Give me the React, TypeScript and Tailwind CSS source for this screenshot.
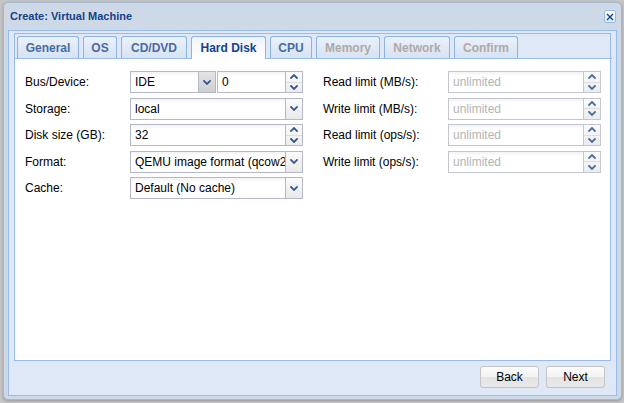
import React from 'react'

const Chevron = ({ up = false, color = '#34568f' }: { up?: boolean; color?: string }) => (
  <svg width="8" height="5" viewBox="0 0 8 5" className={up ? 'rotate-180' : ''}>
    <path d="M1 1 L4 4 L7 1" fill="none" stroke={color} strokeWidth="1.8" strokeLinecap="square" />
  </svg>
)

const CloseIcon = () => (
  <svg width="8" height="8" viewBox="0 0 8 8">
    <path d="M1 1 L7 7 M7 1 L1 7" stroke="#15428b" strokeWidth="1.4" />
  </svg>
)

interface FieldProps {
  value?: string
  placeholder?: string
  width: string
  kind: 'combo' | 'spin'
  disabled?: boolean
  active?: boolean
}

function Field({ value, placeholder, width, kind, disabled, active }: FieldProps) {
  const border = disabled ? 'border-[#c3c6d2]' : 'border-[#b5b8c8]'
  return (
    <div className={`${width} h-[22px] flex border ${border} bg-white overflow-hidden`}>
      <div className="flex-1 min-w-0 flex items-center pl-[4px] text-[12px] whitespace-nowrap overflow-hidden bg-[linear-gradient(to_bottom,#f3f3f3_0px,#ffffff_4px)]">
        {value ? <span className="text-black">{value}</span> : <span className="text-[#b4b4b4]">{placeholder}</span>}
      </div>
      {kind === 'combo' ? (
        <div
          className={`w-[17px] shrink-0 flex items-center justify-center border-l ${border} ${
            active
              ? 'bg-[linear-gradient(to_bottom,#e4e4e4,#cfcfcf)]'
              : 'bg-[linear-gradient(to_bottom,#fbfbfb,#e9e9e9)]'
          }`}
        >
          <Chevron color="#3a5a92" />
        </div>
      ) : (
        <div className={`w-[17px] shrink-0 flex flex-col border-l ${border} bg-[linear-gradient(to_bottom,#fbfbfb,#ececec)]`}>
          <div className="flex-1 flex items-center justify-center border-b border-[#dedede]">
            <Chevron up color={disabled ? '#4c6b9c' : '#34568f'} />
          </div>
          <div className="flex-1 flex items-center justify-center">
            <Chevron color={disabled ? '#4c6b9c' : '#34568f'} />
          </div>
        </div>
      )}
    </div>
  )
}

const tabs = [
  { label: 'General', w: 'w-[62px]', state: 'normal' },
  { label: 'OS', w: 'w-[34px]', state: 'normal' },
  { label: 'CD/DVD', w: 'w-[66px]', state: 'normal' },
  { label: 'Hard Disk', w: 'w-[75px]', state: 'active' },
  { label: 'CPU', w: 'w-[42px]', state: 'normal' },
  { label: 'Memory', w: 'w-[64px]', state: 'disabled' },
  { label: 'Network', w: 'w-[66px]', state: 'disabled' },
  { label: 'Confirm', w: 'w-[64px]', state: 'disabled' },
]

function Tab({ label, w, state }: { label: string; w: string; state: string }) {
  if (state === 'active') {
    return (
      <div className={`${w} h-[23px] -mb-px flex items-center justify-center rounded-t-[3px] border border-b-0 border-[#8db2e3] bg-[linear-gradient(to_bottom,#eef4fb,#ffffff)] text-[12px] font-bold text-[#15428b]`}>
        {label}
      </div>
    )
  }
  return (
    <div
      className={`${w} h-[22px] flex items-center justify-center rounded-t-[3px] border border-b-0 border-[#8db2e3] bg-[linear-gradient(to_bottom,#eaf1fa,#d6e3f3)] text-[12px] font-bold ${
        state === 'disabled' ? 'text-[#b1a8a8]' : 'text-[#4a6b9e]'
      }`}
    >
      {label}
    </div>
  )
}

function Label({ text, w }: { text: string; w: string }) {
  return <div className={`${w} shrink-0 text-[12px] text-black`}>{text}</div>
}

function Button({ text }: { text: string }) {
  return (
    <button className="w-[59px] h-[22px] rounded-[3px] border border-[#c4c4c4] bg-[linear-gradient(to_bottom,#fcfcfc_0%,#f3f3f3_48%,#e4e4e4_52%,#e8e8e8_100%)] text-[12px] text-black">
      {text}
    </button>
  )
}

export default function App() {
  return (
    <div className="w-[624px] h-[403px] bg-[#c6c6c6] pt-[2px] pl-[3px] font-['Liberation_Sans',Arial,sans-serif] overflow-hidden">
      {/* Window */}
      <div className="w-[619px] h-[398px] flex flex-col rounded-[5px] border border-[#a6b8cf] bg-[#ced9e7] shadow-[0_1px_3px_rgba(0,0,0,0.25)]">
        <div className="h-[27px] shrink-0 flex items-center justify-between pl-[6px] pr-[5px]">
          <span className="text-[11px] font-bold text-[#15428b]">Create: Virtual Machine</span>
          <div className="w-[12px] h-[13px] flex items-center justify-center rounded-[2px] border border-[#99bbe8] bg-[linear-gradient(to_bottom,#ffffff,#dde8f6)]">
            <CloseIcon />
          </div>
        </div>

        {/* Window body */}
        <div className="flex-1 mx-[4px] mb-[3px] flex flex-col border border-[#99bbe8] bg-[#dfe8f6]">
          <div className="flex-1 mx-[5px] mt-[2px] flex flex-col">
            {/* Tab strip */}
            <div className="shrink-0 border-t border-x border-[#99bbe8] pt-[2px] pl-[2px]">
              <div className="flex items-end gap-[4px] border-b border-[#99bbe8] -mx-[2px] px-[2px]">
                {tabs.map((t) => (
                  <Tab key={t.label} {...t} />
                ))}
              </div>
            </div>

            {/* Tab body */}
            <div className="flex-1 bg-white border-x border-b border-[#99bbe8] pl-[10px] pt-[12px] flex">
              <div className="flex flex-col gap-[4.6px]">
                <div className="flex items-center h-[22px]">
                  <Label text="Bus/Device:" w="w-[105px]" />
                  <div className="flex gap-[1px]">
                    <Field value="IDE" width="w-[86px]" kind="combo" active />
                    <Field value="0" width="w-[86px]" kind="spin" />
                  </div>
                </div>
                <div className="flex items-center h-[22px]">
                  <Label text="Storage:" w="w-[105px]" />
                  <Field value="local" width="w-[173px]" kind="combo" />
                </div>
                <div className="flex items-center h-[22px]">
                  <Label text="Disk size (GB):" w="w-[105px]" />
                  <Field value="32" width="w-[173px]" kind="spin" />
                </div>
                <div className="flex items-center h-[22px]">
                  <Label text="Format:" w="w-[105px]" />
                  <Field value="QEMU image format (qcow2)" width="w-[173px]" kind="combo" />
                </div>
                <div className="flex items-center h-[22px]">
                  <Label text="Cache:" w="w-[105px]" />
                  <Field value="Default (No cache)" width="w-[173px]" kind="combo" />
                </div>
              </div>

              <div className="ml-[20px] flex flex-col gap-[4.6px]">
                {['Read limit (MB/s):', 'Write limit (MB/s):', 'Read limit (ops/s):', 'Write limit (ops/s):'].map((l) => (
                  <div key={l} className="flex items-center h-[22px]">
                    <Label text={l} w="w-[125px]" />
                    <Field placeholder="unlimited" width="w-[153px]" kind="spin" disabled />
                  </div>
                ))}
              </div>
            </div>
          </div>

          {/* Footer */}
          <div className="h-[34px] shrink-0 flex justify-end items-start gap-[7px] pt-[5px] pr-[11px]">
            <Button text="Back" />
            <Button text="Next" />
          </div>
        </div>
      </div>
    </div>
  )
}
